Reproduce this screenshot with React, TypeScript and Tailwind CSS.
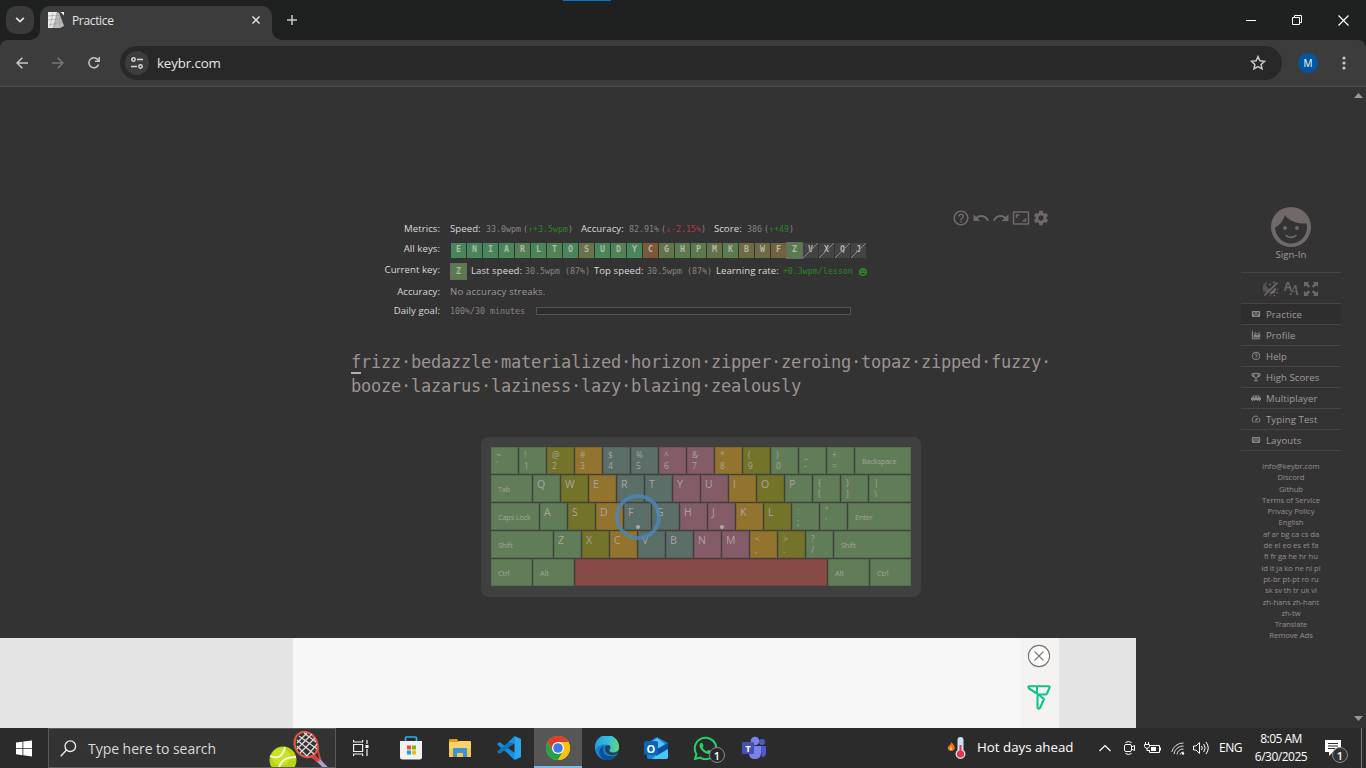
import React from "react";
import { MdHelpOutline, MdUndo, MdRedo, MdAspectRatio, MdSettings, MdKeyboard, MdSpeed } from "react-icons/md";
import { FaWhatsapp } from "react-icons/fa";

const GREEN = "bg-[#607d58]";
const YELLOW = "bg-[#73742a]";
const ORANGE = "bg-[#93742f]";
const TEAL = "bg-[#5b6e68]";
const PINK = "bg-[#835c68]";
const RED = "bg-[#874a44]";

type KeyDef = { c: string; w?: string; top?: string; low?: string; letter?: string; name?: string; dot?: boolean };

const ROWS: KeyDef[][] = [
  [
    { c: GREEN, top: "~", low: "`" },
    { c: GREEN, top: "!", low: "1" },
    { c: YELLOW, top: "@", low: "2" },
    { c: ORANGE, top: "#", low: "3" },
    { c: TEAL, top: "$", low: "4" },
    { c: TEAL, top: "%", low: "5" },
    { c: PINK, top: "^", low: "6" },
    { c: PINK, top: "&", low: "7" },
    { c: ORANGE, top: "*", low: "8" },
    { c: YELLOW, top: "(", low: "9" },
    { c: GREEN, top: ")", low: "0" },
    { c: GREEN, top: "_", low: "-" },
    { c: GREEN, top: "+", low: "=" },
    { c: GREEN, name: "Backspace", w: "w-[57px]" },
  ],
  [
    { c: GREEN, name: "Tab", w: "w-[42px]" },
    { c: GREEN, letter: "Q" },
    { c: YELLOW, letter: "W" },
    { c: ORANGE, letter: "E" },
    { c: TEAL, letter: "R" },
    { c: TEAL, letter: "T" },
    { c: PINK, letter: "Y" },
    { c: PINK, letter: "U" },
    { c: ORANGE, letter: "I" },
    { c: YELLOW, letter: "O" },
    { c: GREEN, letter: "P" },
    { c: GREEN, top: "{", low: "[" },
    { c: GREEN, top: "}", low: "]" },
    { c: GREEN, top: "|", low: "\\", w: "w-[43px]" },
  ],
  [
    { c: GREEN, name: "Caps Lock", w: "w-[49px]" },
    { c: GREEN, letter: "A" },
    { c: YELLOW, letter: "S" },
    { c: ORANGE, letter: "D" },
    { c: TEAL, letter: "F", dot: true },
    { c: TEAL, letter: "G" },
    { c: PINK, letter: "H" },
    { c: PINK, letter: "J", dot: true },
    { c: ORANGE, letter: "K" },
    { c: YELLOW, letter: "L" },
    { c: GREEN, top: ":", low: ";" },
    { c: GREEN, top: '"', low: "'" },
    { c: GREEN, name: "Enter", w: "w-[64px]" },
  ],
  [
    { c: GREEN, name: "Shift", w: "w-[63px]" },
    { c: GREEN, letter: "Z" },
    { c: YELLOW, letter: "X" },
    { c: ORANGE, letter: "C" },
    { c: TEAL, letter: "V" },
    { c: TEAL, letter: "B" },
    { c: PINK, letter: "N" },
    { c: PINK, letter: "M" },
    { c: ORANGE, top: "<", low: "," },
    { c: YELLOW, top: ">", low: "." },
    { c: GREEN, top: "?", low: "/" },
    { c: GREEN, name: "Shift", w: "w-[78px]" },
  ],
  [
    { c: GREEN, name: "Ctrl", w: "w-[42px]" },
    { c: GREEN, name: "Alt", w: "w-[42px]" },
    { c: RED, w: "w-[253px]" },
    { c: GREEN, name: "Alt", w: "w-[42px]" },
    { c: GREEN, name: "Ctrl", w: "w-[42px]" },
  ],
];

function Key({ k }: { k: KeyDef }) {
  return (
    <div className={`${k.w ?? "w-7"} h-7 shrink-0 pb-px pr-px`}>
      <div className={`${k.c} relative flex h-full w-full border border-black/10 text-[#aba3a0]`}>
        {k.name && <span className="self-center whitespace-nowrap pl-[6px] pt-[2px] text-[7.300px] leading-none tracking-[-0.150px] text-[#a5a399]">{k.name}</span>}
        {k.letter && <span className="pl-[3px] pt-[2px] text-[10.500px] leading-[12px]">{k.letter}</span>}
        {k.top && (
          <span className="flex flex-col pl-[4px] pt-px text-[8.500px] leading-[11px] text-[#a9a498]">
            <span>{k.top}</span>
            <span>{k.low}</span>
          </span>
        )}
        {k.dot && <span className="absolute left-[11px] top-[21px] h-1 w-1 rounded-full bg-[#b0a8a8]" />}
      </div>
    </div>
  );
}

const LESSON_KEYS: [string, string][] = [
  ["E", "bg-[#47865a]"], ["N", "bg-[#47865a]"], ["I", "bg-[#47865a]"], ["A", "bg-[#488558]"],
  ["R", "bg-[#538052]"], ["L", "bg-[#488558]"], ["T", "bg-[#508253]"], ["O", "bg-[#47865a]"],
  ["S", "bg-[#677348]"], ["U", "bg-[#488558]"], ["D", "bg-[#508253]"], ["Y", "bg-[#47865a]"],
  ["C", "bg-[#7d5939]"], ["G", "bg-[#617648]"], ["H", "bg-[#597b4d]"], ["P", "bg-[#5a7a4c]"],
  ["M", "bg-[#627348]"], ["K", "bg-[#597b4d]"], ["B", "bg-[#6b6c43]"], ["W", "bg-[#6b6c43]"],
  ["F", "bg-[#74623e]"],
];

function Label({ children, h }: { children: React.ReactNode; h: string }) {
  return <div className={`${h} w-[440px] shrink-0 pr-0 text-right`}>{children}</div>;
}

const MONO = "font-['DejaVu_Sans_Mono',monospace]";

function Mono({ children, className = "", color = "text-[#8b8282]" }: { children: React.ReactNode; className?: string; color?: string }) {
  return <span className={`${MONO} whitespace-pre text-[8.3px] font-normal ${color} ${className}`}>{children}</span>;
}

function Metrics() {
  return (
    <div className="flex w-[950px] flex-col pt-[10px] text-[9.600px] font-medium tracking-[0.060px] text-[#dcd8d8] whitespace-nowrap">
      <div className="flex h-5 items-center">
        <Label h="h-auto">Metrics:</Label>
        <span className="ml-[10px] w-[36px]">Speed:</span>
        <Mono className="tracking-normal">33.0wpm</Mono>
        <Mono className="ml-[2px] tracking-normal">(<b className="font-normal text-[#2c8527]">↑+3.5wpm</b>)</Mono>
        <span className="ml-[8px] w-[48px]">Accuracy:</span>
        <Mono className="tracking-normal">82.91%</Mono>
        <Mono className="ml-[2px] tracking-normal">(<b className="font-normal text-[#b03d48]">↓-2.15%</b>)</Mono>
        <span className="ml-[8px] w-[33px]">Score:</span>
        <Mono className="tracking-normal">386</Mono>
        <Mono className="ml-[2px] tracking-normal">(<b className="font-normal text-[#2c8527]">↑+49</b>)</Mono>
      </div>
      <div className="flex h-5 items-center">
        <Label h="h-auto">All keys:</Label>
        <div className={`ml-[11px] mt-[3px] flex h-[15px] text-[8.3px] font-bold text-[#b9b5ab] ${MONO}`}>
          {LESSON_KEYS.map(([l, c]) => (
            <div key={l} className={`${c} mr-px flex h-[15px] w-[15px] justify-center leading-[13px]`}>{l}</div>
          ))}
          <div className="-ml-px -mt-px flex h-[17px] w-[17px] justify-center border border-[#6c6666] bg-[#597b4d] leading-[13px]">Z</div>
          {["V", "X", "Q", "J"].map((l) => (
            <div key={l} className="relative mr-px flex h-[15px] w-[15px] justify-center bg-[#444] leading-[13px]">
              {l}
              <svg className="absolute inset-0" width="15" height="15"><path d="M0 15L15 0" stroke="#8b8585" strokeWidth="1" /></svg>
            </div>
          ))}
        </div>
      </div>
      <div className="flex h-6 items-center">
        <Label h="h-[16px]">Current key:</Label>
        <div className={`ml-[10px] flex h-[17px] w-[17px] justify-center border border-[#6c6666] bg-[#597b4d] text-[8.3px] font-bold leading-[14px] text-[#b9b5ab] ${MONO}`}>Z</div>
        <span className="ml-[4px] w-[54px] pt-px">Last speed:</span>
        <Mono className="pt-px tracking-normal">30.5wpm (87%)</Mono>
        <span className="ml-[4px] w-[53px] pt-px">Top speed:</span>
        <Mono className="pt-px tracking-normal">30.5wpm (87%)</Mono>
        <span className="ml-[4px] w-[67px] pt-px">Learning rate:</span>
        <Mono className="pt-px tracking-normal" color="text-[#2c8527]">+0.3wpm/lesson</Mono>
        <svg className="ml-[6px] mt-px" width="8" height="8" viewBox="0 0 8 8">
          <circle cx="4" cy="4" r="4" fill="#2c8527" />
          <circle cx="2.6" cy="3" r=".7" fill="#333" />
          <circle cx="5.4" cy="3" r=".7" fill="#333" />
          <path d="M2 5h4a2 1.6 0 0 1-4 0z" fill="#333" />
        </svg>
      </div>
      <div className="flex h-[18px] items-center">
        <Label h="h-auto">Accuracy:</Label>
        <span className="ml-[10px] font-normal tracking-[0.180px] text-[#a09696]">No accuracy streaks.</span>
      </div>
      <div className="flex h-5 items-center">
        <Label h="h-auto">Daily goal:</Label>
        <Mono className="ml-[10px] tracking-normal">100%/30 minutes</Mono>
        <div className="ml-[11px] h-2 w-[315px] border border-[#545252] bg-[#2c2c2c]" />
      </div>
    </div>
  );
}

function Keyboard() {
  return (
    <div className="relative ml-[481px] mt-[39px] h-40 w-[440px] rounded-lg bg-[#404040] pl-[10px] pt-[10px]">
      {ROWS.map((r, i) => (
        <div key={i} className="flex">{r.map((k, j) => <Key key={j} k={k} />)}</div>
      ))}
      <div className="absolute left-[134px] top-[57px] h-[46px] w-[46px] rounded-full border-4 border-[#4b87b9]/80" />
    </div>
  );
}

const MI = "shrink-0 text-[#8e8686]";
const MENU: [string, React.ReactNode][] = [
  ["Practice", <MdKeyboard size={10} className={MI} />],
  ["Profile", <svg width="10" height="10" viewBox="0 0 24 24" className={MI} fill="currentColor"><path d="M2 2h2.500v17.500H22V22H2z" /><path d="M6 18v-5l4-4 5 4 7-6v11zM6 9l4-4 5 4 7-6v2l-7 6-5-4-4 4z" /></svg>],
  ["Help", <MdHelpOutline size={10} className={MI} />],
  ["High Scores", <svg width="10" height="10" viewBox="0 0 24 24" className={MI} fill="none" stroke="currentColor" strokeWidth="2.600"><path d="M7 3h10v5c0 3-2 6-5 6s-5-3-5-6zM7 4H2.500v2c0 3 2 5 5 5M17 4h4.500v2c0 3-2 5-5 5M12 14v6M7.500 21h9" /></svg>],
  ["Multiplayer", <svg width="10" height="10" viewBox="0 0 24 24" className={MI} fill="currentColor"><path d="M0 17v-5l3-2 2-4h6l1 1.500L13 6h6l2 4 3 2v5h-2v2h-3v-2h-3v2h-2v-2h-4v2H8v-2H5v2H2v-2zM7 8l-1 2.500h4V8zm7 0v2.500h4L17 8z" fillRule="evenodd" /></svg>],
  ["Typing Test", <MdSpeed size={10} className={MI} />],
  ["Layouts", <MdKeyboard size={10} className={MI} />],
];

const LINKS = ["info@keybr.com", "Discord", "Github", "Terms of Service", "Privacy Policy", "English", "af ar bg ca cs da", "de el eo es et fa", "fi fr ga he hr hu", "id it ja ko ne nl pl", "pt-br pt-pt ro ru", "sk sv th tr uk vi", "zh-hans zh-hant", "zh-tw", "Translate", "Remove Ads"];

function Sidebar() {
  return (
    <aside className="ml-[105px] flex w-[100px] shrink-0 flex-col pt-[120px] text-[#a39a9a]">
      <svg className="mx-auto shrink-0" width="40" height="40" viewBox="0 0 40 40">
        <circle cx="20" cy="20" r="20" fill="#706969" />
        <path d="M4 20.500C8 19 12 14 14 8c4 6 12 9 21.500 8.500.8 2 .5 4 .5 5C35 30 28.500 36.500 20 36.500S5 30 4 20.500z" fill="#333" />
        <circle cx="14" cy="21" r="1.900" fill="#706969" />
        <circle cx="26" cy="21" r="1.900" fill="#706969" />
        <path d="M14.500 28c3 3.200 8 3.200 11 0" fill="none" stroke="#706969" strokeWidth="1.600" />
      </svg>
      <div className="h-[25px] text-center text-[9.600px] leading-[15px] tracking-[0.100px]">Sign-In</div>
      <div className="flex h-[31px] items-center justify-center gap-[4px] border-t border-[#454545] pt-px text-[#706969]">
        <svg width="16" height="16" viewBox="0 0 16 16" fill="currentColor" stroke="none">
          <path d="M3 3a4 4 0 0 0 4 4.500A4 4 0 1 1 3 3z" fillOpacity=".6" />
          <path d="M1.500 14.500L14.500 1.500" stroke="currentColor" strokeWidth="1.600" />
          <path d="M6.500 12.500l6-6a4.500 4.500 0 0 1-6 6zM13 11l2.500.5-2 1.200zM11.500 13.500l1 2-2.500-1zM8 14l-.5 2-1-2zM13.500 8l2-.6-1 1.600zM7 2l.5 1 1 .3-1 .5L7 5l-.5-1.200-1-.5 1-.3zM11 0l.5 1 1 .4-1 .5-.5 1-.5-1-1-.5 1-.4zM3 1l.4.8.8.300-.8.4-.4.8-.4-.8-.8-.4.8-.3z" />
        </svg>
        <div className="flex h-4 w-4 justify-center leading-none">
          <span className="font-['Liberation_Sans',sans-serif] text-[12px] font-bold leading-[12px]">A</span>
          <span className="-ml-[2px] mt-[3px] font-['Liberation_Serif',serif] text-[14px] italic leading-[13px]">A</span>
        </div>
        <svg width="16" height="16" viewBox="0 0 16 16" fill="currentColor">
          <path d="M1 1h5L4.500 2.500l2.600 2.600-1.700 1.700-2.600-2.600L1 6zM15 1v5l-1.800-1.800-2.600 2.600-1.700-1.700 2.600-2.600L10 1zM1 15v-5l1.800 1.800 2.600-2.600 1.700 1.700-2.600 2.600L6 15zM15 15h-5l1.500-1.500-2.600-2.600 1.700-1.700 2.600 2.600L15 10z" />
        </svg>
      </div>
      {MENU.map(([t, icon], i) => (
        <div key={t} className={`flex h-[21px] items-center border-t border-[#454545] pl-[10px] text-[9.600px] tracking-[0.080px] ${i === 0 ? "bg-[#2e2e2e]" : ""}`}>
          {icon}
          <span className="ml-[5px] whitespace-nowrap pt-[2px]">{t}</span>
        </div>
      ))}
      <div className="flex flex-col border-t border-[#454545] pt-[10px] text-center text-[7.700px] leading-[11.290px] tracking-[-0.070px] text-[#958e8e]">
        {LINKS.map((l) => <span key={l} className="whitespace-nowrap">{l}</span>)}
      </div>
    </aside>
  );
}

function Ad() {
  return (
    <div className="mt-auto flex h-[90px] shrink-0 bg-[#e4e4e4]">
      <div className="ml-[293px] w-[728px] bg-[#f7f7f7]" />
      <div className="flex w-[38px] flex-col items-center bg-[#f5f3f2] pr-[3px] pt-[6px]">
        <svg className="shrink-0" width="24" height="24" viewBox="0 0 24 24" fill="#fff" stroke="#777" strokeWidth="1.100">
          <circle cx="12" cy="12" r="10.600" /><path d="M7.500 7.500l9 9M16.500 7.500l-9 9" />
        </svg>
        <svg className="mt-[16px] shrink-0" width="26" height="27" viewBox="0 0 26 27" fill="none" stroke="#0bc58d" strokeWidth="2.100" strokeLinejoin="round" strokeLinecap="round">
          <path d="M3.500 2.200h19q1.500 0 1 1.500L21 9.500q-.5 1-1.500 1H12.500L3 4.500Q1.500 2.200 3.500 2.200zM11 3v6.500M12.500 10.500l5.500 4.500-4 9q-1.500 1.500-2.500-.5V12" />
        </svg>
      </div>
    </div>
  );
}

function Browser() {
  return (
    <>
      <div className="relative flex h-10 shrink-0 bg-[#1f2120] pl-[6px] pt-[6px]">
        <div className="absolute left-[563px] top-0 h-px w-12 bg-[#0078d4]" />
        <div className="flex h-7 w-7 items-center justify-center rounded-[10px] bg-[#3a3a3a]">
          <svg width="10" height="6" viewBox="0 0 10 6" fill="none" stroke="#e3e3e3" strokeWidth="1.800"><path d="M1.200.9L5 4.600 8.800.9" /></svg>
        </div>
        <div className="relative ml-[6px] flex h-[34px] w-[232px] items-center rounded-t-[10px] bg-[#3c3c3c] pl-2 text-[12px] text-[#e3e3e3]">
          <svg className="absolute -left-[10px] bottom-0" width="10" height="10"><path d="M10 0v10H0A10 10 0 0 0 10 0z" fill="#3c3c3c" /></svg>
          <svg className="absolute -right-[10px] bottom-0" width="10" height="10"><path d="M0 0v10h10A10 10 0 0 1 0 0z" fill="#3c3c3c" /></svg>
          <svg className="-mt-[6px]" width="16" height="16" viewBox="0 0 16 16">
            <path d="M0 1l11-.5L16 14l-4 2H0z" fill="#bdbdbd" /><path d="M0 0h9L4 16H0z" fill="#ededed" />
            <path d="M0 4l11-1M0 8l13-1.500M1 13l13-3M5 1L2 15M9 1L7 15M11 2l1 13" stroke="#999" strokeWidth=".6" />
            <path d="M12.500 0H16v3.500z" fill="#f4f4f4" />
          </svg>
          <span className="ml-[8px] -mt-[4px] tracking-[-0.350px]">Practice</span>
          <svg className="ml-auto mr-[12px] -mt-[6px]" width="8" height="8" viewBox="0 0 8 8" stroke="#e3e3e3" strokeWidth="1.500"><path d="M.5.5l7 7M7.500.5l-7 7" /></svg>
        </div>
        <svg className="ml-[15px] mt-[9px]" width="10" height="10" stroke="#c7c7c7" strokeWidth="1.500"><path d="M5 0v10M0 5h10" /></svg>
        <div className="ml-auto flex items-center pb-[6px] pr-[17px]">
          <svg width="10" height="10" stroke="#fff"><path d="M0 5.500h10" /></svg>
          <svg className="ml-[36px]" width="10" height="10" fill="none" stroke="#fff"><path d="M.5 2.500h7v7h-7zM2.500 2V.5h7v7H8" /></svg>
          <svg className="ml-[36px]" width="11" height="11" stroke="#fff" strokeWidth="1.200"><path d="M.5.5l10 10M10.500.5l-10 10" /></svg>
        </div>
      </div>
      <div className="h-[47px] shrink-0 bg-[#1f2120]">
        <div className="flex h-full items-center rounded-t-[8px] border-b border-[#4a4a4a] bg-[#3c3c3c] pl-[16px]">
          <svg width="12" height="12" viewBox="0 0 12 12" fill="none" stroke="#c7c7c7" strokeWidth="1.500"><path d="M12 6H1M6.300.7L1 6l5.300 5.300" /></svg>
          <svg className="ml-[24px]" width="12" height="12" viewBox="0 0 12 12" fill="none" stroke="#777" strokeWidth="1.500"><path d="M0 6h11M5.700.7L11 6l-5.300 5.300" /></svg>
          <svg className="ml-[24px]" width="12" height="12" viewBox="0 0 12 12" fill="none" stroke="#c7c7c7" strokeWidth="1.500"><path d="M10.600 7.500A5 5 0 1 1 9.700 2.600L11 4M11.200 0v4.300H7" /></svg>
          <div className="ml-[20px] flex h-[34px] w-[1162px] items-center rounded-full bg-[#282828] pl-[5px] pr-[16px]">
            <div className="flex h-6 w-6 items-center justify-center rounded-full bg-[#3c3c3c]">
              <svg width="14" height="14" viewBox="0 0 14 14" fill="none" stroke="#d5d5d5" strokeWidth="1.500"><circle cx="3.500" cy="3.500" r="1.700" /><path d="M7 3.500h6M1 10.500h6" /><circle cx="10.500" cy="10.500" r="1.700" /></svg>
            </div>
            <span className="ml-[8px] mt-[2px] text-[13.300px] tracking-[-0.120px] text-[#e8e8e8]">keybr.com</span>
            <svg className="ml-auto" width="16" height="16" viewBox="0 0 16 16" fill="none" stroke="#c7c7c7" strokeWidth="1.500"><path d="M8 1.600l1.900 4.200 4.600.5-3.400 3.100.9 4.500L8 11.600l-4 2.300.9-4.500L1.500 6.300l4.600-.5z" /></svg>
          </div>
          <div className="ml-[16px] flex h-5 w-5 items-center justify-center rounded-full bg-[#0356a0] text-[10px] font-medium text-white">M</div>
          <svg className="ml-[24px]" width="4" height="14" fill="#c7c7c7"><circle cx="2" cy="2" r="1.600" /><circle cx="2" cy="7" r="1.600" /><circle cx="2" cy="12" r="1.600" /></svg>
        </div>
      </div>
    </>
  );
}

function Taskbar() {
  return (
    <footer className="flex h-10 shrink-0 items-center bg-[#2c2b2b] text-white">
      <svg className="ml-[16px]" width="16" height="17" viewBox="0 0 16 17" fill="#fff"><path d="M0 2.600l6.500-.9V8H0zM7.300 1.600L16 .4V8H7.300zM0 8.800h6.500v6.400L0 14.300zM7.300 8.800H16v7.700l-8.700-1.200z" /></svg>
      <div className="ml-[16px] flex h-10 w-[288px] items-center overflow-hidden border border-[#5b5a5a] bg-[#333] pl-[11px]">
        <svg width="17" height="17" viewBox="0 0 17 17" fill="none" stroke="#eee" strokeWidth="1.300"><circle cx="10.300" cy="6.200" r="5.300" /><path d="M6.500 10L.7 16.300" /></svg>
        <span className="ml-[11px] whitespace-nowrap text-[14px] tracking-[-0.040px] text-[#d9d9d9]">Type here to search</span>
        <svg className="ml-auto mr-[6px] shrink-0" width="60" height="38" viewBox="0 0 60 38">
          <path d="M34 26q8-1 15 7M48 15q1 9 4 18" stroke="#d8403a" strokeWidth="2" fill="none" />
          <path d="M49 31l9 9" stroke="#aaa0cb" strokeWidth="4" />
          <path d="M45 27l5 5" stroke="#d8403a" strokeWidth="3" />
          <ellipse cx="37" cy="15.500" rx="11" ry="13" transform="rotate(-28 37 15.500)" fill="#333" stroke="#e0573f" strokeWidth="2.200" />
          <path d="M28 11l17 14M30 7l18 13M35 4l12 9M28 17l10 10M46 9L31 24M43 5L28 20M38 4l-10 10M48 15L38 27" stroke="#ddd" strokeWidth="1.200" />
          <circle cx="14" cy="31" r="13.500" fill="#b6d512" /><circle cx="12" cy="28" r="9" fill="#c9e223" />
          <path d="M1 27q12 5 15-9M10 40q1-12 17-12" fill="none" stroke="#f5f8df" strokeWidth="1.800" />
        </svg>
      </div>
      <div className="mr-[3px] flex h-full w-12 items-center justify-center">
        <svg width="17" height="16" viewBox="0 0 17 16" fill="none" stroke="#f0f0f0" strokeWidth="1.200"><path d="M1.600 4.500h9v7h-9zM1.600 0v2h9V0M1.600 16v-2h9v2M15 0v4M15 9v7" /><path d="M13.500 5h3v3h-3z" fill="#fff" stroke="none" /></svg>
      </div>
      <div className="flex h-full gap-px">
        <div className="flex w-12 items-center justify-center">
          <svg width="24" height="24" viewBox="0 0 24 24"><path d="M6.500 6V2q0-1 1-1h9q1 0 1 1v4" fill="none" stroke="#28aef0" strokeWidth="1.700" /><path d="M1 5h22v16q0 2.500-2.500 2.500h-17Q1 23.500 1 21z" fill="#f2f2f2" /><path d="M8 9.500h4v4H8z" fill="#ee5023" /><path d="M13 9.500h4v4h-4z" fill="#7db902" /><path d="M8 14.500h4v4H8z" fill="#08a4ee" /><path d="M13 14.500h4v4h-4z" fill="#feb800" /></svg>
        </div>
        <div className="flex w-12 items-center justify-center">
          <svg width="24" height="22" viewBox="0 0 24 22"><path d="M1 3q0-1 1-1h7l2 3H1z" fill="#e19b0b" /><path d="M1 5h9l1-1h11q1 0 1 1v15H1z" fill="#fad168" /><path d="M1 12h22v8H1z" fill="#f8c64b" /><path d="M5 20v-8q0-1 1-1h12q1 0 1 1v8h-4v-4H9v4z" fill="#3b93d8" /></svg>
        </div>
        <div className="flex w-12 items-center justify-center">
          <svg width="24" height="24" viewBox="0 0 24 24"><path d="M0.500 7.500L2.500 6l15.500 11v6.500L.5 9z" fill="#168cdb" /><path d="M.5 16.500L2.500 18 18 7V.5L.5 15z" fill="#0f75bc" /><path d="M17.500 0L24 3v18l-6.500 3z" fill="#29a7f1" /><path d="M17.500 0L11 6.500l6.500 1zM17.500 24L11 17.500l6.500-1z" fill="#1a8fe0" /></svg>
        </div>
        <div className="flex w-12 items-center justify-center border-b-2 border-[#76b9ed] bg-[#575656] pt-[2px]">
          <svg width="24" height="24" viewBox="0 0 24 24"><circle cx="12" cy="12" r="12" fill="#fbc116" /><path d="M12 6H22.400A12 12 0 0 0 1.600 6l5.200 9z" fill="#e33b2e" /><path d="M1.600 6A12 12 0 0 0 12 24l5.200-9L12 17.500 6.800 15z" fill="#26a149" /><path d="M17.200 15L12 24A12 12 0 0 0 22.400 6H12z" fill="#fbc116" /><circle cx="12" cy="12" r="6" fill="#fff" /><circle cx="12" cy="12" r="4.800" fill="#397de8" /></svg>
        </div>
        <div className="flex w-12 items-center justify-center">
          <svg width="24" height="24" viewBox="0 0 24 24"><defs><linearGradient id="eg" x1="0" x2="1"><stop stopColor="#249fe3" /><stop offset=".6" stopColor="#35c1dc" /><stop offset="1" stopColor="#62dc66" /></linearGradient></defs><circle cx="12" cy="12" r="12" fill="#1683d2" /><path d="M0 11A12 12 0 0 1 24 11c0 4-3 6-6.500 6-3 0-4-1.500-3-3 2-3-1-5.500-5-5.500C5 8.500 1 11 0 15z" fill="url(#eg)" /><path d="M9 10c-3 6 2 13 13 9-3 4-8 6-12 5C3 21 2 12 9 10z" fill="#0d4f94" /><path d="M24 13c-1 3-5 4-8 3-2-.5-2-2-1-3 1.500-3-.5-4-2-4-5 0-4 9 3 10 3 .3 5-.5 7-2z" fill="#2c2b2b" opacity=".75" /></svg>
        </div>
        <div className="flex w-12 items-center justify-center">
          <div className="relative h-6 w-6">
            <svg width="24" height="24" viewBox="0 0 24 24"><path d="M3 7l10-6 11 6v14q0 2-2 2H5q-2 0-2-2z" fill="#1385d8" /><path d="M6 7l7-5 8 6-8 5z" fill="#53c7f5" /><path d="M24 8v13q0 2-2 2H8z" fill="#42c8f6" /><path d="M12 14l12-7v6L12 20z" fill="#0f4c9b" /></svg>
            <div className="absolute left-0 top-[5px] flex h-[14px] w-[14px] items-center justify-center rounded-[2px] bg-[#0c62bd] text-[11px] font-bold leading-none">O</div>
          </div>
        </div>
        <div className="relative flex w-12 items-center justify-center">
          <FaWhatsapp size={27} color="#25d366" />
          <div className="absolute left-[28px] top-[19px] flex h-4 w-4 items-center justify-center rounded-full border border-[#8d8d8d] bg-[#292929] text-[11px] font-semibold leading-none">1</div>
        </div>
        <div className="flex w-12 items-center justify-center">
          <div className="relative h-6 w-6">
            <svg width="24" height="24" viewBox="0 0 24 24"><circle cx="20" cy="6" r="3" fill="#5059c9" /><circle cx="13" cy="5" r="4.300" fill="#7b83eb" /><path d="M18 10h6v7q0 4-4 4z" fill="#5059c9" /><path d="M7 10h12v7q0 6-6 6t-6-6z" fill="#7b83eb" /></svg>
            <div className="absolute left-0 top-[6px] flex h-3 w-3 items-center justify-center rounded-[1px] bg-[#4650b8] text-[9px] font-bold leading-none">T</div>
          </div>
        </div>
      </div>
      <div className="ml-auto flex h-full items-center">
        <svg width="20" height="24" viewBox="0 0 20 24"><path d="M4 6q5 4 3.500 7.500-3.500 3-6.500 0Q0 10 3 9q1-1 1-3z" fill="#f06a24" /><path d="M4 10q2 2 1 4H3q-1-2 1-4z" fill="#ffd34a" /><path d="M10.500 4a3 3 0 0 1 6 0v10a5 5 0 1 1-6 0z" fill="#c8e2f5" /><path d="M12.500 9h2v8h-2z" fill="#e0354b" /><circle cx="13.500" cy="18" r="3.600" fill="#e0354b" /></svg>
        <span className="ml-[10px] w-[97px] whitespace-nowrap text-[13.300px]">Hot days ahead</span>
        <svg className="ml-[25px]" width="12" height="8" fill="none" stroke="#fff" strokeWidth="1.200"><path d="M.5 7L6 1.500 11.500 7" /></svg>
        <svg className="ml-[12px]" width="13" height="16" viewBox="0 0 13 16" fill="none" stroke="#fff"><rect x="1.500" y="4.500" width="7" height="7" rx="1.500" /><path d="M8.500 7l3-1.500v5L8.500 9M2.500 2.500q3-2 6 0M2.500 13.500q3 2 6 0" /></svg>
        <svg className="ml-[8px]" width="17" height="14" viewBox="0 0 17 14" fill="none" stroke="#fff"><path d="M6 4.500h9.500v7H5.500V9M16.500 6.500v3M1.500 1v2M4.500 1v2M.5 3.500h5v2q-1 2-2.500 2t-2.500-2zM3 7.500v2h2" /><path d="M7 6h5v4H7z" fill="#fff" stroke="none" /></svg>
        <svg className="ml-[10px]" width="14" height="14" viewBox="0 0 14 14" fill="none" stroke="#ddd"><path d="M.8 11A11.500 11.500 0 0 1 12.500 2M3 13A9 9 0 0 1 12.500 5M6 13.500A6 6 0 0 1 12.500 8M9 13.500A3.500 3.500 0 0 1 12.500 11" /><circle cx="12" cy="12.500" r="1.200" fill="#fff" stroke="none" /></svg>
        <svg className="ml-[8px]" width="17" height="14" viewBox="0 0 17 14" fill="none" stroke="#fff"><path d="M.5 5h2.500L6.500 1.500v11L3 9H.5zM8.500 5q1.500 2 0 4M10.700 3q3 4 0 8M13 1q4.500 6 0 12" /></svg>
        <span className="ml-[9px] w-[25px] text-[12px] tracking-[-0.500px]">ENG</span>
        <div className="ml-[10px] flex w-[54px] flex-col items-center whitespace-nowrap text-[12px] leading-[18px] tracking-[-0.500px]">
          <span>8:05 AM</span>
          <span>6/30/2025</span>
        </div>
        <div className="relative ml-[17px] h-6 w-6">
          <svg className="mt-[4px]" width="16" height="16" viewBox="0 0 16 16"><path d="M0 0h16v12H8l-4 4v-4H0z" fill="#fff" /><path d="M3 3.500h10M3 6h10M3 8.500h7" stroke="#2c2b2b" /></svg>
          <div className="absolute left-[7px] top-[11px] flex h-4 w-4 items-center justify-center rounded-full border border-[#8d8d8d] bg-[#333] text-[11px] font-semibold leading-none">1</div>
        </div>
        <div className="ml-[12px] mr-[4px] h-10 w-px bg-[#777]" />
      </div>
    </footer>
  );
}

export default function App() {
  return (
    <div className="flex h-[768px] w-[1366px] flex-col overflow-hidden bg-[#333] font-['Open_Sans','Noto_Sans',sans-serif]">
      <Browser />
      <div className="flex min-h-0 flex-1 bg-[#333]">
        <main className="flex w-[1136px] shrink-0 flex-col">
          <div className="mt-[122px] flex h-[112px]">
            <Metrics />
            <div className="flex h-[18px] items-center gap-[2px] pl-[2px] text-[#706969]">
              <MdHelpOutline size={18} />
              <MdUndo size={18} />
              <MdRedo size={18} />
              <MdAspectRatio size={18} />
              <MdSettings size={18} />
            </div>
          </div>
          <div className={`ml-[351px] mt-[29px] whitespace-pre text-[17px] leading-6 tracking-[-0.235px] text-[#9b9292] ${MONO}`}>
            <div><span className="underline decoration-[#b8b0b0] decoration-2 underline-offset-4">f</span>rizz·bedazzle·materialized·horizon·zipper·zeroing·topaz·zipped·fuzzy·</div>
            <div>booze·lazarus·laziness·lazy·blazing·zealously</div>
          </div>
          <Keyboard />
          <Ad />
        </main>
        <Sidebar />
        <div className="ml-auto flex w-[15px] flex-col items-center justify-between pb-[7px] pt-[6px]">
          <svg width="9" height="5"><path d="M4.500 0L9 5H0z" fill="#9f9797" /></svg>
          <svg width="9" height="5"><path d="M0 0h9L4.500 5z" fill="#9f9797" /></svg>
        </div>
      </div>
      <Taskbar />
    </div>
  );
}
